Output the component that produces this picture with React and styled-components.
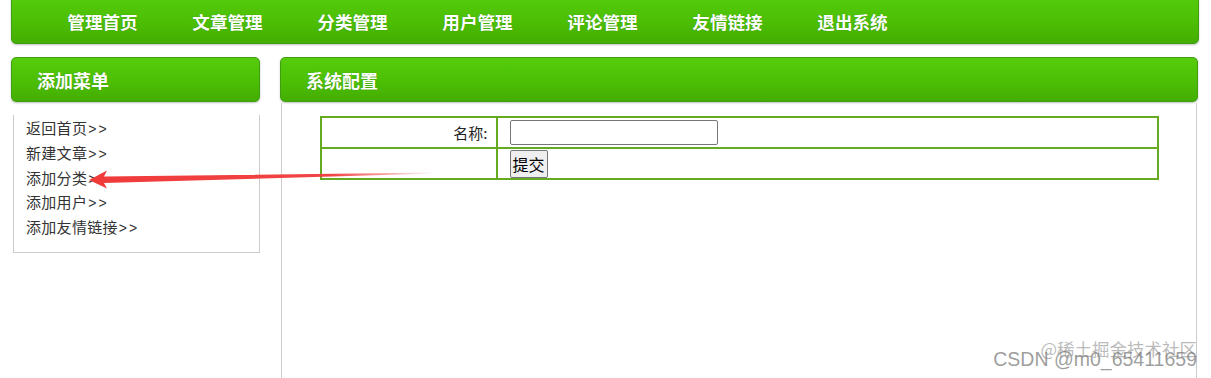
import React from 'react';
import styled, { createGlobalStyle } from 'styled-components';

const GlobalStyle = createGlobalStyle`
  html, body {
    margin: 0;
    padding: 0;
    background: #ffffff;
  }
  body {
    font-family: "Liberation Sans", "Noto Sans CJK SC", sans-serif;
    overflow: hidden;
  }
`;

const navItems = ['管理首页', '文章管理', '分类管理', '用户管理', '评论管理', '友情链接', '退出系统'];
const menuItems = ['返回首页', '新建文章', '添加分类', '添加用户', '添加友情链接'];

const App = () => {
  return (
    <Page>
      <GlobalStyle />
      <TopNav>
        {navItems.map((item) => (
          <NavItem key={item} href="#">{item}</NavItem>
        ))}
      </TopNav>

      <Body>
        <Sidebar>
          <GreenBar>添加菜单</GreenBar>
          <MenuBox>
            {menuItems.map((item) => (
              <MenuLink key={item} href="#">{item}<Chevrons>&gt;&gt;</Chevrons></MenuLink>
            ))}
          </MenuBox>
        </Sidebar>

        <Main>
          <GreenBar>系统配置</GreenBar>
          <Panel>
            <FormTable>
              <tbody>
                <tr>
                  <LabelCell>名称:</LabelCell>
                  <FieldCell>
                    <TextInput type="text" />
                  </FieldCell>
                </tr>
                <tr>
                  <LabelCell />
                  <FieldCell>
                    <SubmitButton type="button">提交</SubmitButton>
                  </FieldCell>
                </tr>
              </tbody>
            </FormTable>
          </Panel>
        </Main>
      </Body>

      <Arrow width="1211" height="378" viewBox="0 0 1211 378">
        <defs>
          <linearGradient id="fade" x1="89" y1="0" x2="436" y2="0" gradientUnits="userSpaceOnUse">
            <stop offset="0" stopColor="#f03a3a" stopOpacity="1" />
            <stop offset="0.7" stopColor="#f03a3a" stopOpacity="0.95" />
            <stop offset="1" stopColor="#f03a3a" stopOpacity="0" />
          </linearGradient>
        </defs>
        <polygon
          points="89,180 107,170.5 104,176.5 436,172.6 436,173.6 104,183 107,188.5"
          fill="url(#fade)"
        />
      </Arrow>

      <WatermarkJuejin>@稀土掘金技术社区</WatermarkJuejin>
      <WatermarkCsdn>CSDN @m0_65411659</WatermarkCsdn>
    </Page>
  );
};

const Page = styled.div`
  position: relative;
  width: 1211px;
  height: 378px;
  overflow: hidden;
`;

const TopNav = styled.nav`
  box-sizing: border-box;
  margin: -6px 0 0 11px;
  width: 1188px;
  height: 50px;
  padding: 6px 0 0 28px;
  display: flex;
  align-items: center;
  background: linear-gradient(to bottom, #55cc0c 0%, #4cbf05 55%, #44ad02 100%);
  border: 1px solid #3f9e12;
  border-radius: 5px;
  box-shadow: 0 1px 2px rgba(0, 0, 0, 0.25);
`;

const NavItem = styled.a`
  width: 125px;
  text-align: center;
  color: #ffffff;
  text-decoration: none;
  font-family: "Noto Sans CJK SC", sans-serif;
  font-weight: 700;
  font-size: 17.6px;
  line-height: 20px;
  text-shadow: 0 0 1px rgba(0, 60, 0, 0.4);
`;

const Body = styled.div`
  display: flex;
  gap: 20px;
  margin: 13px 0 0 11px;
  align-items: flex-start;
`;

const Sidebar = styled.div`
  width: 249px;
  display: flex;
  flex-direction: column;
`;

const Main = styled.div`
  width: 918px;
  display: flex;
  flex-direction: column;
`;

const GreenBar = styled.div`
  box-sizing: border-box;
  width: 100%;
  height: 45px;
  padding-left: 25px;
  display: flex;
  align-items: center;
  color: #ffffff;
  font-family: "Noto Sans CJK SC", sans-serif;
  font-weight: 700;
  font-size: 18px;
  background: linear-gradient(to bottom, #55cc0c 0%, #4cbf05 55%, #44ad02 100%);
  border: 1px solid #3f9e12;
  border-radius: 5px;
  box-shadow: 0 1px 2px rgba(0, 0, 0, 0.25);
  text-shadow: 0 0 1px rgba(0, 60, 0, 0.4);
`;

const MenuBox = styled.div`
  box-sizing: border-box;
  margin: 13px 0 0 2px;
  width: 247px;
  padding: 2px 0 11px 12px;
  display: flex;
  flex-direction: column;
  border: 1px solid #cccccc;
  border-top: none;
`;

const MenuLink = styled.a`
  font-size: 15px;
  line-height: 24.8px;
  color: #333333;
  text-decoration: none;
  font-family: "Liberation Sans", "Noto Sans CJK SC", sans-serif;
  letter-spacing: 0.3px;
`;

const Chevrons = styled.span`
  font-size: 14px;
  letter-spacing: 2px;
  margin-left: 1px;
`;

const Panel = styled.div`
  box-sizing: border-box;
  margin: 1px 1px 0;
  height: 300px;
  padding-top: 13px;
  border-left: 1px solid #cccccc;
  border-right: 1px solid #cccccc;
`;

const FormTable = styled.table`
  width: 839px;
  margin: 0 auto;
  border-collapse: separate;
  border-spacing: 0;
  border: 1px solid #66aa22;
`;

const LabelCell = styled.td`
  box-sizing: border-box;
  width: 176px;
  height: 31px;
  padding: 0 8px 0 0;
  text-align: right;
  font-size: 15px;
  color: #222222;
  border: 1px solid #66aa22;
  font-family: "Noto Sans CJK SC", sans-serif;
`;

const FieldCell = styled.td`
  box-sizing: border-box;
  height: 31px;
  padding: 0 0 0 12px;
  border: 1px solid #66aa22;
`;

const TextInput = styled.input`
  box-sizing: border-box;
  display: block;
  width: 208px;
  height: 25px;
  margin: 0;
  padding: 1px 2px;
  border: 1px solid #767676;
  border-radius: 2px;
  background: #ffffff;
`;

const SubmitButton = styled.button`
  box-sizing: border-box;
  display: block;
  height: 28px;
  padding: 0 2px;
  margin: 0;
  font-family: "Noto Sans CJK SC", sans-serif;
  font-size: 16px;
  line-height: 24px;
  color: #000000;
  background: #efefef;
  border: 1px solid #767676;
  border-radius: 2px;
`;

const Arrow = styled.svg`
  position: absolute;
  left: 0;
  top: 0;
  pointer-events: none;
`;

const WatermarkJuejin = styled.span`
  position: absolute;
  right: 14px;
  top: 337px;
  font-family: "Noto Sans CJK SC", sans-serif;
  font-size: 17.5px;
  line-height: 24px;
  color: rgba(140, 140, 140, 0.6);
  pointer-events: none;
`;

const WatermarkCsdn = styled.span`
  position: absolute;
  right: 14px;
  top: 348px;
  font-family: "Liberation Sans", sans-serif;
  font-size: 19.5px;
  line-height: 22px;
  color: rgba(115, 115, 115, 0.7);
  pointer-events: none;
`;

export default App;
